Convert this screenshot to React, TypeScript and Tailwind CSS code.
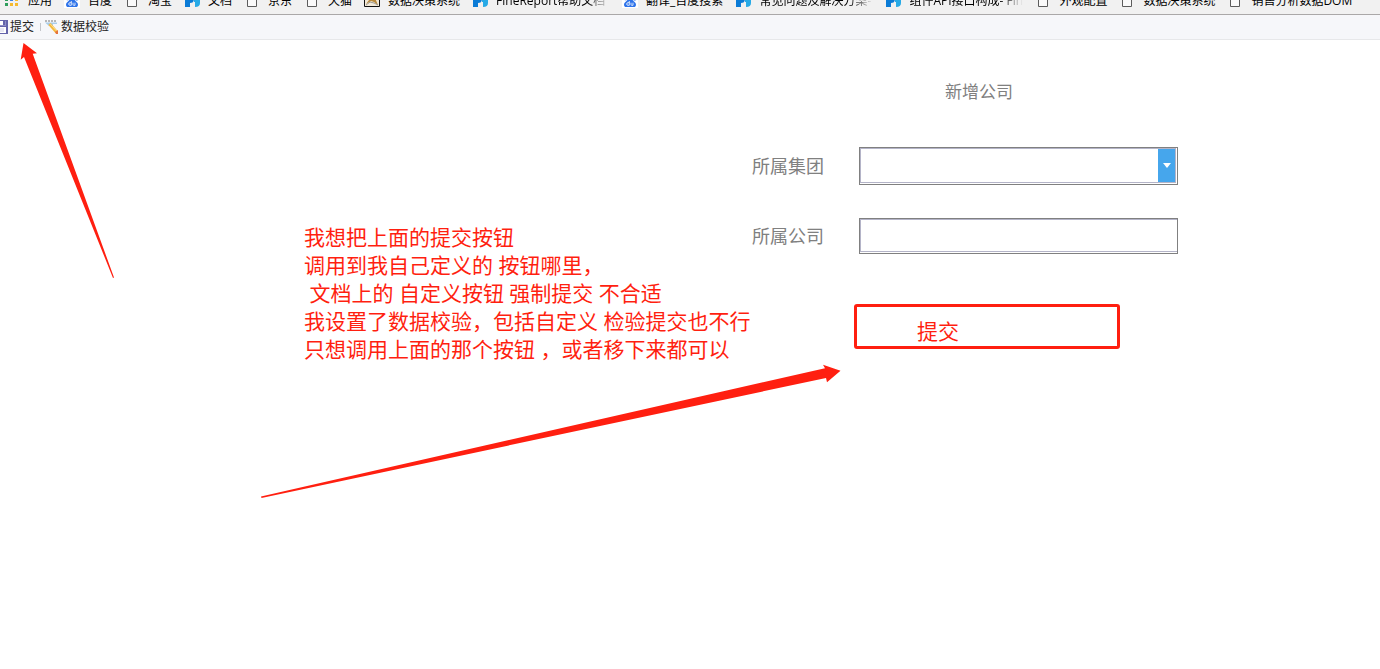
import React from "react";

type IconName = "apps" | "baidu" | "page" | "fine" | "cat";

interface Bookmark {
  label: string;
  icon: IconName;
  long?: boolean;
}

const bookmarks: Bookmark[] = [
  { label: "应用", icon: "apps" },
  { label: "百度", icon: "baidu" },
  { label: "淘宝", icon: "page" },
  { label: "文档", icon: "fine" },
  { label: "京东", icon: "page" },
  { label: "天猫", icon: "page" },
  { label: "数据决策系统", icon: "cat" },
  { label: "FineReport帮助文档", icon: "fine", long: true },
  { label: "翻译_百度搜索", icon: "baidu" },
  { label: "常见问题及解决方案-", icon: "fine", long: true },
  { label: "组件API接口构成- Fin", icon: "fine", long: true },
  { label: "外观配置", icon: "page" },
  { label: "数据决策系统", icon: "page" },
  { label: "销售分析数据DOM", icon: "page" },
];

function BookmarkIcon({ name }: { name: IconName }) {
  return (
    <svg className="h-4 w-4 shrink-0" viewBox="0 0 16 16" aria-hidden="true">
      {name === "apps" && (
        <>
          <path fill="#ea4335" d="M1 0h3v3H1zM6 0h3v3H6zM11 0h3v3h-3z" />
          <path fill="#2f9e5b" d="M1 5h3v3H1z" />
          <path fill="#3b82e6" d="M6 5h3v3H6z" />
          <path fill="#f5b92e" d="M11 5h3v3h-3z" />
          <path fill="#2f9e5b" d="M1 10h3v3H1z" />
          <path fill="#f5b92e" d="M6 10h3v3H6zM11 10h3v3h-3z" />
        </>
      )}
      {name === "baidu" && (
        <>
          <path fill="#fff" d="M0 0h16v15H0z" />
          <ellipse cx="3.5" cy="5" rx="1.8" ry="2.2" fill="#2f74ea" />
          <ellipse cx="6.2" cy="2" rx="1.6" ry="2" fill="#2f74ea" />
          <ellipse cx="10" cy="2" rx="1.6" ry="2" fill="#2f74ea" />
          <ellipse cx="12.7" cy="5.4" rx="1.6" ry="2.2" fill="#2f74ea" />
          <path
            fill="#2f74ea"
            d="M8 5.500c1.800 0 2.600 1.600 4 3 1.600 1.400 2.400 2.600 1.800 4.200-.6 1.600-2.300 1.500-5.800 1.300-3.500.2-5.200.3-5.800-1.300-.6-1.600.2-2.800 1.800-4.200 1.400-1.400 2.200-3 4-3z"
          />
          <path
            fill="none"
            stroke="#fff"
            strokeWidth=".8"
            d="M7.300 8v4.300H6a1.300 1.300 0 010-2.600h1.300M9 9.700v1.800c0 .6.300.8.800.8h1.200V9.700"
          />
        </>
      )}
      {name === "page" && (
        <path fill="#fafafa" stroke="#5c5c5c" d="M3.500 1.500h9v12h-9z" />
      )}
      {name === "fine" && (
        <>
          <path fill="#0a7bd6" d="M1 0h9v5c0 4-1.500 5-4 5v4H1z" />
          <path fill="#27aae6" d="M10 2h6v8c0 2.500-1.500 4-5 4V9h-1z" />
        </>
      )}
      {name === "cat" && (
        <>
          <path fill="#f3ead8" stroke="#111" d="M.5.5h15v13H.5z" />
          <path fill="#b98a3c" d="M2 6l4-3 5 2 3 7-4-3-3-1-5 3 3-4z" />
          <path fill="none" stroke="#777" strokeWidth=".7" d="M2 12l4-3 4 1 4 2" />
        </>
      )}
    </svg>
  );
}

function SaveIcon() {
  return (
    <svg className="h-4 w-2 shrink-0" viewBox="8 0 8 16" aria-hidden="true">
      <path fill="#6464ab" d="M0 1h16v14H0z" />
      <path fill="#fff" d="M2 8h12v6H2z" />
      <path fill="#8f8fc6" d="M2 2h12v5H2z" />
      <path fill="#fff" d="M8 2h4v4H8z" />
      <path fill="#6464ab" d="M11 2h2v4h-2z" />
      <path fill="#e7e7f3" d="M3 9h9v4H3z" />
    </svg>
  );
}

function VerifyIcon() {
  return (
    <svg className="h-4 w-4 shrink-0" viewBox="0 0 16 16" aria-hidden="true">
      <path stroke="#777" strokeDasharray="2 1" d="M0 2h12" />
      <path fill="#a9cdea" d="M0 3.500h12v1.500H8v2H4z" />
      <path stroke="#f6b93c" strokeWidth="3" d="M4.500 5l7 8" />
      <path stroke="#fde08a" d="M5.200 4.800l7 8" />
      <path fill="#e5743c" d="M10 13l3-2v4h-2z" />
    </svg>
  );
}

export default function App() {
  return (
    <div className="relative min-h-screen overflow-hidden bg-white font-['Open_Sans','Noto_Sans_CJK_SC',sans-serif]">
      {/* Bookmarks bar, only its lower half is in view */}
      <nav className="flex h-[15px] items-end overflow-hidden border-b border-[#aaa8a8] bg-[#f1f1f1]">
        <div className="flex h-[26px] shrink-0 items-center gap-3 pl-1">
          {bookmarks.map((item, i) => (
            <a
              key={i}
              href="#"
              className="flex shrink-0 items-center gap-2 text-xs whitespace-nowrap text-black"
            >
              <BookmarkIcon name={item.icon} />
              <span
                className={
                  item.long
                    ? "w-[114px] overflow-hidden mask-r-from-80% mask-r-to-100%"
                    : ""
                }
              >
                {item.label}
              </span>
            </a>
          ))}
        </div>
      </nav>

      {/* Report toolbar */}
      <div className="flex h-[25px] items-center border-b border-[#e7e8ea] bg-[#f6f7fa] text-xs text-[#222]">
        <button type="button" className="flex items-center gap-0.5">
          <SaveIcon />
          提交
        </button>
        <div className="mr-1 ml-1.5 h-2 w-px bg-[#c4c6ca]" />
        <button type="button" className="flex items-center">
          <VerifyIcon />
          数据校验
        </button>
      </div>

      <main className="flex pl-[304px]">
        <p className="w-[448px] shrink-0 pt-[183px] text-[21px] leading-7 whitespace-pre text-[#ff1f10]">
          {"我想把上面的提交按钮\n调用到我自己定义的 按钮哪里，\n 文档上的 自定义按钮 强制提交 不合适\n我设置了数据校验，包括自定义 检验提交也不行\n只想调用上面的那个按钮 ，或者移下来都可以"}
        </p>

        <form
          className="w-[426px] shrink-0 pt-10 text-lg text-[#808080]"
          onSubmit={(e) => e.preventDefault()}
        >
          <h1 className="pl-7 text-center text-[17px] leading-6">新增公司</h1>

          <div className="mt-[43px] flex items-center">
            <label htmlFor="group" className="w-[107px]">
              所属集团
            </label>
            <div className="relative h-[38px] flex-1 border border-[#808080] pr-px pb-px">
              <select
                id="group"
                className="block h-full w-full appearance-none border border-[#b4b4c8] bg-white px-2 outline-none"
              />
              <span className="pointer-events-none absolute top-px right-0.5 bottom-0.5 flex w-[17px] items-center justify-center bg-[#46a6ec]">
                <svg className="h-[5px] w-2" viewBox="0 0 8 5">
                  <path fill="#fff" d="M0 0h8L4 5z" />
                </svg>
              </span>
            </div>
          </div>

          <div className="mt-[33px] flex items-center">
            <label htmlFor="company" className="w-[107px]">
              所属公司
            </label>
            <div className="h-9 flex-1 border border-[#808080] pb-px">
              <input
                id="company"
                type="text"
                className="block h-full w-full border border-r-0 border-[#b4b4c8] bg-white px-2 outline-none"
              />
            </div>
          </div>

          <button
            type="submit"
            className="mt-[50px] ml-[102px] block h-[45px] w-[266px] rounded-[3px] border-3 border-[#ff1f10] pt-2 pl-[60px] text-left text-[21px] leading-7 text-[#ff1f10]"
          >
            提交
          </button>
        </form>
      </main>

      {/* Hand-drawn arrows over the page */}
      <svg
        className="pointer-events-none absolute top-0 left-0 h-[520px] w-[860px]"
        viewBox="0 0 860 520"
        fill="#ff1f10"
        aria-hidden="true"
      >
        <path d="M23.500 43L37 53.200L32.700 53.700L114 277.500L113 278L24 57L20.700 59.700Z" />
        <path d="M840.500 370.700L823 364.700L825 368.200L261 496.500L261.500 498L826 378L827 382.300Z" />
      </svg>
    </div>
  );
}
